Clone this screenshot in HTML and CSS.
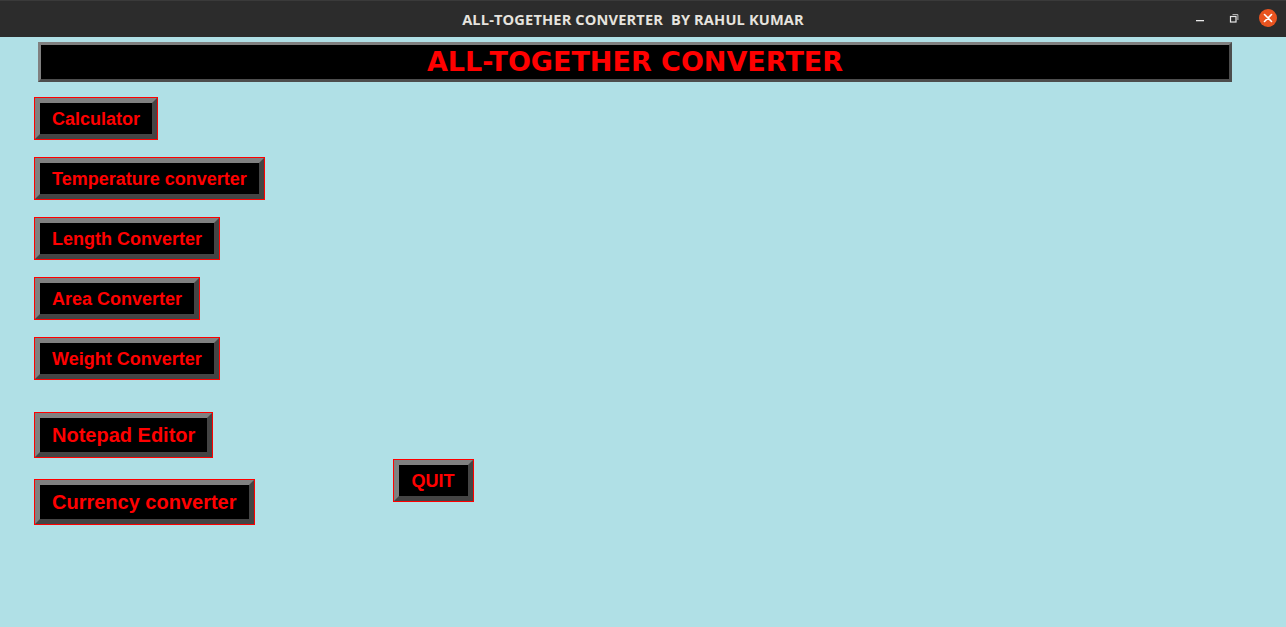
FILE: index.html
```html
<!DOCTYPE html>
<html>
<head>
<meta charset="utf-8">
<link rel="stylesheet" href="styles.css">
</head>
<body>
<div class="titlebar">
  <div class="title">ALL-TOGETHER CONVERTER&nbsp; BY RAHUL KUMAR</div>
  <div class="controls">
    <svg class="ctl min" width="14" height="14" viewBox="0 0 14 14"><rect x="3" y="9" width="8" height="1.3" fill="#e8e8e8"/></svg>
    <svg class="ctl max" width="14" height="14" viewBox="0 0 14 14"><rect x="3.5" y="5.5" width="5.5" height="5.5" fill="none" stroke="#e8e8e8" stroke-width="1.2"/><path d="M5.5 3.6 H10.9 V9" fill="none" stroke="#bbbbbb" stroke-width="1"/></svg>
    <div class="close"><svg width="18" height="18" viewBox="0 0 18 18"><path d="M5.5 5.5 L12.5 12.5 M12.5 5.5 L5.5 12.5" stroke="#ffffff" stroke-width="1.6" stroke-linecap="round"/></svg></div>
  </div>
</div>
<div class="app">
  <div class="header">ALL-TOGETHER CONVERTER</div>
  <div class="menu">
    <div class="btn"><span class="face">Calculator</span></div>
    <div class="btn"><span class="face">Temperature converter</span></div>
    <div class="btn"><span class="face">Length Converter</span></div>
    <div class="btn"><span class="face">Area Converter</span></div>
    <div class="btn"><span class="face">Weight Converter</span></div>
  </div>
  <div class="bottom">
    <div class="menu2">
      <div class="btn big"><span class="face">Notepad Editor</span></div>
      <div class="btn big"><span class="face">Currency converter</span></div>
    </div>
    <div class="btn quit"><span class="face">QUIT</span></div>
  </div>
</div>
</body>
</html>
```
FILE: styles.css
```css
html, body {
  margin: 0;
  padding: 0;
}
body {
  width: 1286px;
  height: 627px;
  background: #b0e0e6;
  overflow: hidden;
  font-family: "Liberation Sans", Arial, sans-serif;
}
.titlebar {
  height: 37px;
  background: #2c2c2c;
  border-top: 1px solid #3a3a3a;
  box-sizing: border-box;
  display: flex;
  align-items: center;
  justify-content: center;
  position: relative;
}
.title {
  color: #e6e3de;
  font-family: "Open Sans", "DejaVu Sans", sans-serif;
  font-weight: 700;
  font-size: 14.6px;
  letter-spacing: 0.15px;
  margin-right: 20px;
}
.controls {
  position: absolute;
  right: 9px;
  top: 8px;
  display: flex;
  align-items: center;
}
.ctl {
  display: block;
}
.max {
  margin-left: 20px;
}
.close {
  width: 18px;
  height: 18px;
  border-radius: 50%;
  background: #e95420;
  margin-left: 18px;
}
.close svg {
  display: block;
}
.app {
  display: flex;
  flex-direction: column;
  padding-left: 34px;
}
.header {
  margin-top: 5px;
  margin-left: 4px;
  width: 1194px;
  height: 40px;
  box-sizing: border-box;
  background: #000;
  border: 3px solid;
  border-color: #808080 #4d4d4d #4d4d4d #808080;
  color: #ff0000;
  font-family: "DejaVu Sans", sans-serif;
  font-weight: 700;
  font-size: 27px;
  line-height: 33px;
  text-align: center;
  padding-left: 0;
}
.menu {
  display: flex;
  flex-direction: column;
  align-items: flex-start;
  gap: 17px;
  margin-top: 15px;
}
.btn {
  display: flex;
  border: 1px solid #ff0000;
  height: 43px;
  box-sizing: border-box;
}
.face {
  display: block;
  box-sizing: border-box;
  background: #000;
  border: 5px solid;
  border-color: #808080 #444444 #444444 #808080;
  color: #ff0000;
  font-weight: 700;
  font-size: 18px;
  line-height: 30px;
  padding: 1px 12px 0 12px;
  white-space: nowrap;
}
.btn.big {
  height: 46px;
}
.btn.big .face {
  font-size: 20px;
  line-height: 33px;
  padding: 1px 12px 0 12px;
}
.bottom {
  display: flex;
  align-items: flex-start;
  margin-top: 32px;
}
.menu2 {
  display: flex;
  flex-direction: column;
  align-items: flex-start;
  gap: 21px;
}
.quit {
  margin-left: 138px;
  margin-top: 47px;
}
.quit .face {
  padding-left: 13px;
  padding-right: 13px;
}
```
